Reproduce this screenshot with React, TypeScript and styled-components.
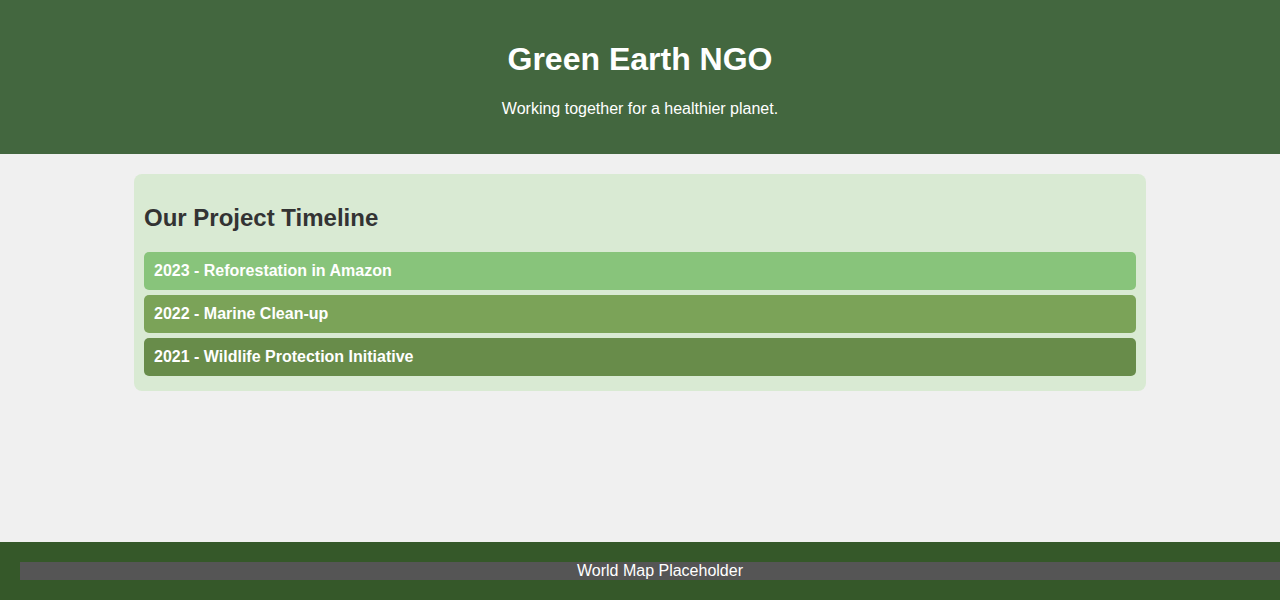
import React from "react";
import styled, { createGlobalStyle } from "styled-components";

const Global = createGlobalStyle`
  html, body { margin: 0; padding: 0; }
  body {
    font-family: "Liberation Sans", Arial, sans-serif;
    background: #f0f0f0;
    color: #333;
    overflow: hidden;
  }
`;

const Page = styled.div`
  min-height: 100vh;
  display: flex;
  flex-direction: column;
`;

const Header = styled.header`
  background: #43673f;
  color: #fff;
  text-align: center;
  padding: 20px;
`;

const Title = styled.h1`
  font-size: 32px;
  margin: 21.44px 0;
`;

const Tagline = styled.p`
  font-size: 16px;
  margin: 16px 0;
`;

const Main = styled.main`
  flex: 1;
  padding-top: 20px;
`;

const Section = styled.section`
  width: 992px;
  margin: 0 auto;
  padding: 10px;
  background: #d9ead3;
  border-radius: 8px;
`;

const Heading = styled.h2`
  font-size: 24px;
  margin: 19.92px 0;
  color: #333;
`;

const Item = styled.div<{ $bg: string }>`
  background: ${(p) => p.$bg};
  color: #fff;
  font-weight: bold;
  font-size: 16px;
  padding: 10px;
  border-radius: 5px;
  margin-bottom: 5px;
`;

const Footer = styled.footer`
  background: #355829;
  color: #fff;
  padding: 20px;
`;

const MapBar = styled.div`
  width: 100vw;
  background: #555;
  text-align: center;
  font-size: 16px;
  line-height: 18px;
`;

const items = [
  { text: "2023 - Reforestation in Amazon", bg: "#88c47b" },
  { text: "2022 - Marine Clean-up", bg: "#7ba358" },
  { text: "2021 - Wildlife Protection Initiative", bg: "#688c4a" },
];

export default function App() {
  return (
    <Page>
      <Global />
      <Header>
        <Title>Green Earth NGO</Title>
        <Tagline>Working together for a healthier planet.</Tagline>
      </Header>
      <Main>
        <Section>
          <Heading>Our Project Timeline</Heading>
          {items.map((it) => (
            <Item key={it.text} $bg={it.bg}>
              {it.text}
            </Item>
          ))}
        </Section>
      </Main>
      <Footer>
        <MapBar>World Map Placeholder</MapBar>
      </Footer>
    </Page>
  );
}
